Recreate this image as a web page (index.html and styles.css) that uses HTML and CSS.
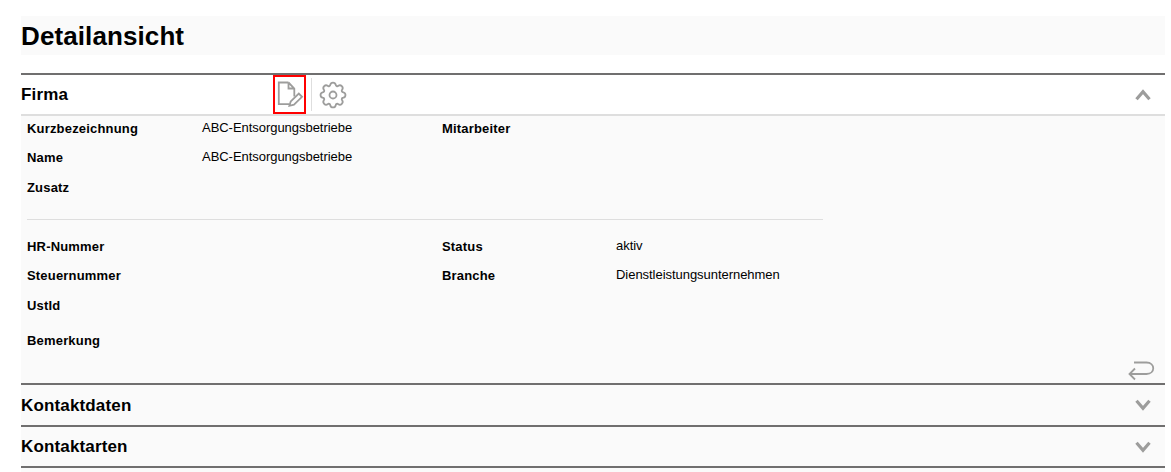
FILE: index.html
```html
<!DOCTYPE html>
<html lang="de">
<head>
    <meta charset="UTF-8">
    <meta name="viewport" content="width=device-width, initial-scale=1.0">
    <title>Detailansicht</title>
    <link rel="stylesheet" href="styles.css">
</head>
<body>

<h1 class="page-title">Detailansicht</h1>

<div class="accordion">
    <section class="panel">
        <div class="panel-header open">
            <h2 class="panel-title">Firma</h2>
            <div class="tools">
                <button class="tool edit" aria-label="Bearbeiten">
                    <svg width="29" height="35" viewBox="0 0 29 35">
                        <path d="M13.5 5.5H3.8V27.2H14.5M13.5 5.5L19.3 11.5V19.5M13.5 5.5V11.5H19.3"/>
                        <path d="M15.8 24.3L23.8 16.6L27 19.8L19 27.6L14.4 28.8Z"/>
                    </svg>
                </button>
                <button class="tool settings" aria-label="Einstellungen">
                    <svg width="28" height="28" viewBox="0 0 28 28">
                        <circle cx="14" cy="14" r="3.5"/>
                        <path d="M11.26 3.76A2.8 2.8 0 0 1 16.74 3.76A1.5 1.5 0 0 0 19.3 4.82A2.8 2.8 0 0 1 23.18 8.7A1.5 1.5 0 0 0 24.24 11.26A2.8 2.8 0 0 1 24.24 16.74A1.5 1.5 0 0 0 23.18 19.3A2.8 2.8 0 0 1 19.3 23.18A1.5 1.5 0 0 0 16.74 24.24A2.8 2.8 0 0 1 11.26 24.24A1.5 1.5 0 0 0 8.7 23.18A2.8 2.8 0 0 1 4.82 19.3A1.5 1.5 0 0 0 3.76 16.74A2.8 2.8 0 0 1 3.76 11.26A1.5 1.5 0 0 0 4.82 8.7A2.8 2.8 0 0 1 8.7 4.82A1.5 1.5 0 0 0 11.26 3.76Z"/>
                    </svg>
                </button>
            </div>
            <svg class="chevron" width="16" height="12" viewBox="0 0 16 12"><path d="M1.5 10.3L8 2.8L14.5 10.3"/></svg>
        </div>

        <div class="panel-body">
            <div class="fields">
                <span class="label">Kurzbezeichnung</span>
                <span class="value">ABC-Entsorgungsbetriebe</span>
                <span class="label">Mitarbeiter</span>
                <span class="value"></span>

                <span class="label">Name</span>
                <span class="value">ABC-Entsorgungsbetriebe</span>
                <span class="label"></span>
                <span class="value"></span>

                <span class="label">Zusatz</span>
            </div>

            <hr class="divider">

            <div class="fields">
                <span class="label">HR-Nummer</span>
                <span class="value"></span>
                <span class="label">Status</span>
                <span class="value">aktiv</span>

                <span class="label">Steuernummer</span>
                <span class="value"></span>
                <span class="label">Branche</span>
                <span class="value">Dienstleistungsunternehmen</span>

                <span class="label">UstId</span>
            </div>

            <div class="fields remark">
                <span class="label">Bemerkung</span>
            </div>

            <div class="panel-footer">
                <svg class="back" width="28" height="20" viewBox="0 0 28 20">
                    <path d="M7 1.5H19.5C28.5 1.5 28.5 13 19.5 13H2.5M8 7.5L2.5 13L8 18.5"/>
                </svg>
            </div>
        </div>
    </section>

    <section class="panel">
        <div class="panel-header first">
            <h2 class="panel-title">Kontaktdaten</h2>
            <svg class="chevron" width="16" height="12" viewBox="0 0 16 12"><path d="M1.5 1.7L8 9.2L14.5 1.7"/></svg>
        </div>
    </section>

    <section class="panel">
        <div class="panel-header last">
            <h2 class="panel-title">Kontaktarten</h2>
            <svg class="chevron" width="16" height="12" viewBox="0 0 16 12"><path d="M1.5 1.7L8 9.2L14.5 1.7"/></svg>
        </div>
    </section>

    <section class="panel"></section>
</div>

</body>
</html>
```
FILE: styles.css
```css
* {
    box-sizing: border-box;
}

body {
    margin: 0;
    padding: 16px 6px 0 21px;
    height: 472px;
    overflow: hidden;
    display: flex;
    flex-direction: column;
    font-family: "Liberation Sans", Arial, sans-serif;
    background-color: #fff;
    color: #000;
}

.page-title {
    margin: 0 0 18px;
    height: 39px;
    line-height: 41px;
    font-size: 26px;
    letter-spacing: 0.1px;
    background-color: #fafafa;
}

.accordion {
    flex: 1;
    display: flex;
    flex-direction: column;
}

.panel {
    border-top: 2px solid #706f6f;
    background-color: #fafafa;
}

.panel:last-child {
    flex: 1;
}

.panel-header {
    display: flex;
    align-items: center;
    height: 40px;
    padding-right: 14px;
}

.panel-header.open {
    height: 41px;
    background-color: #fff;
    border-bottom: 2px solid #dedede;
}

.panel-header.last {
    height: 39px;
}

.panel-title {
    margin: 0;
    width: 252px;
    font-size: 17px;
    line-height: 20px;
    letter-spacing: 0.15px;
}

.first .panel-title {
    padding-top: 2px;
}

.tools {
    display: flex;
    align-items: center;
}

.tool {
    display: flex;
    align-items: center;
    justify-content: center;
    padding: 0;
    border: none;
    background: none;
}

.tool.edit {
    width: 33px;
    height: 39px;
    border: 2px solid #f00;
}

.tool.settings {
    height: 33px;
    margin-left: 5px;
    padding-left: 7px;
    border-left: 1px solid #dedede;
}

svg {
    fill: none;
    stroke: #9d9d9c;
    stroke-width: 1.8;
}

.chevron {
    margin-left: auto;
    stroke-width: 3.2;
}

/* Felder */
.panel-body {
    height: 267px;
    padding-left: 6px;
    display: flex;
    flex-direction: column;
}

.fields {
    display: grid;
    grid-template-columns: 175px 240px 174px auto;
    grid-template-rows: 29px 30px;
    grid-auto-rows: 29px;
    padding-top: 5px;
}

.label {
    font-size: 13px;
    line-height: 15px;
    font-weight: bold;
    letter-spacing: 0.18px;
}

.value {
    font-size: 13px;
    line-height: 15px;
    letter-spacing: -0.04px;
    margin-top: -1px;
}

.divider {
    width: 796px;
    height: 1px;
    margin: 10px 0 14px;
    border: none;
    background-color: #dedede;
}

.remark {
    grid-template-rows: 15px;
    padding-top: 6px;
}

.panel-footer {
    margin-top: auto;
    padding: 0 10px 2px;
    display: flex;
    justify-content: flex-end;
}
```
